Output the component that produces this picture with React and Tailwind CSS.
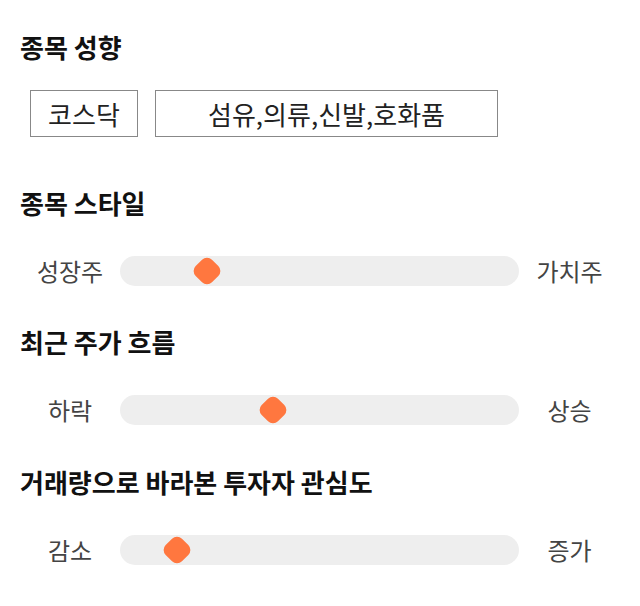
import React from "react";

const font = { fontFamily: '"Noto Sans CJK KR", "Noto Sans", sans-serif' };

function Slider({ left, right, pos }) {
  return (
    <div className="flex items-center h-[30px]">
      <div className="w-[100px] text-center text-[24px] text-[#444] leading-none">{left}</div>
      <div className="relative w-[399px] h-[30px] rounded-full bg-[#eeeeee]">
        <div
          className="absolute top-1/2 w-[23px] h-[23px] rounded-[7px] bg-[#ff773f] -translate-x-1/2 -translate-y-1/2 rotate-45"
          style={{ left: `${pos}px` }}
        />
      </div>
      <div className="w-[101px] text-center text-[24px] text-[#444] leading-none">{right}</div>
    </div>
  );
}

function Heading({ children, className = "" }) {
  return (
    <div className={`h-[30px] flex items-center text-[26px] font-bold text-[#111] leading-none ${className}`}>
      {children}
    </div>
  );
}

export default function App() {
  return (
    <div className="w-[640px] h-[606px] bg-white pl-[20px] pt-[32px]" style={font}>
      <Heading>종목 성향</Heading>
      <div className="flex gap-[17px] ml-[10px] mt-[28px]">
        <div className="w-[108px] h-[47px] border border-[#888] flex items-center justify-center text-[26px] text-[#222]">
          코스닥
        </div>
        <div className="w-[343px] h-[47px] border border-[#888] flex items-center justify-center text-[26px] text-[#222]">
          섬유,의류,신발,호화품
        </div>
      </div>
      <Heading className="mt-[51px]">종목 스타일</Heading>
      <div className="mt-[38px]">
        <Slider left="성장주" right="가치주" pos={87} />
      </div>
      <Heading className="mt-[41px]">최근 주가 흐름</Heading>
      <div className="mt-[38px]">
        <Slider left="하락" right="상승" pos={153} />
      </div>
      <Heading className="mt-[42px]">거래량으로 바라본 투자자 관심도</Heading>
      <div className="mt-[38px]">
        <Slider left="감소" right="증가" pos={57} />
      </div>
    </div>
  );
}
